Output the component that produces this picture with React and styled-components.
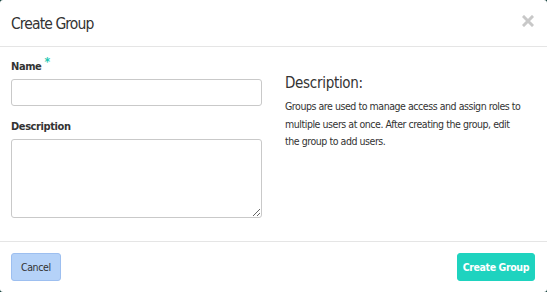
import React from 'react';
import styled, { createGlobalStyle } from 'styled-components';

const GlobalStyle = createGlobalStyle`
  html, body {
    margin: 0;
    padding: 0;
    background: #0b3a34;
  }
  body {
    font-family: "DejaVu Sans Condensed", "Liberation Sans", sans-serif;
    color: #333;
  }
`;

const Modal = styled.div`
  width: 547px;
  height: 292px;
  background: #fff;
  border-radius: 3px;
  display: flex;
  flex-direction: column;
`;

const Header = styled.div`
  height: 47px;
  flex: none;
  border-bottom: 1px solid #e5e5e5;
  display: flex;
  align-items: center;
  justify-content: space-between;
  padding: 2px 13px 0 11px;
  box-sizing: border-box;
`;

const Title = styled.h4`
  margin: 0;
  font-size: 15.5px;
  font-weight: 400;
  letter-spacing: -0.9px;
  color: #333;
`;

const Close = styled.button`
  border: 0;
  background: none;
  padding: 0;
  color: #c8c8c8;
  cursor: pointer;
  display: flex;
  margin-top: -6px;
`;

const Body = styled.div`
  flex: 1;
  display: grid;
  grid-template-columns: 251px 1fr;
  column-gap: 23px;
  padding: 13px 11px 0 11px;
`;

const Field = styled.div`
  display: flex;
  flex-direction: column;
  margin-bottom: 14px;
`;

const Label = styled.label`
  font-size: 11px;
  font-weight: 700;
  letter-spacing: -0.4px;
  color: #333;
  margin-bottom: 6px;
  display: flex;
  align-items: flex-start;
  gap: 3px;
`;

const Required = styled.span`
  color: #1fc8b3;
  font-size: 12px;
  line-height: 1;
  margin-top: -4px;
`;

const Input = styled.input`
  height: 27px;
  box-sizing: border-box;
  border: 1px solid #c9c9c9;
  border-radius: 3px;
  font: inherit;
`;

const TextArea = styled.textarea`
  height: 79px;
  box-sizing: border-box;
  border: 1px solid #c9c9c9;
  border-radius: 3px;
  font: inherit;
`;

const Aside = styled.div`
  padding-top: 14px;
`;

const AsideTitle = styled.h4`
  margin: 0 0 6px;
  font-size: 15px;
  font-weight: 400;
  letter-spacing: -0.3px;
  color: #333;
`;

const AsideText = styled.p`
  margin: 0;
  font-size: 10.5px;
  letter-spacing: -0.45px;
  line-height: 17.5px;
  color: #333;
`;

const Footer = styled.div`
  height: 51px;
  flex: none;
  box-sizing: border-box;
  border-top: 1px solid #e5e5e5;
  display: flex;
  align-items: center;
  justify-content: space-between;
  padding: 0 12px 0 11px;
`;

const Button = styled.button`
  height: 28px;
  padding: 0 ${(p) => (p.$primary ? 5 : 9)}px;
  border-radius: 3px;
  font-family: inherit;
  font-size: 10.5px;
  letter-spacing: -0.4px;
  cursor: pointer;
  border: 1px solid ${(p) => (p.$primary ? '#1ed3bf' : '#9dbff0')};
  background: ${(p) => (p.$primary ? '#1ed3bf' : '#b5d2f8')};
  color: ${(p) => (p.$primary ? '#fff' : '#333')};
  font-weight: ${(p) => (p.$primary ? 700 : 400)};
`;

const CloseIcon = () => (
  <svg width="12" height="12" viewBox="0 0 12 12">
    <path d="M2 2 L10 10 M10 2 L2 10" stroke="currentColor" strokeWidth="3" strokeLinecap="square" />
  </svg>
);

export default function App() {
  return (
    <>
      <GlobalStyle />
      <Modal>
        <Header>
          <Title>Create Group</Title>
          <Close aria-label="Close">
            <CloseIcon />
          </Close>
        </Header>
        <Body>
          <div>
            <Field>
              <Label>
                Name <Required>*</Required>
              </Label>
              <Input />
            </Field>
            <Field>
              <Label>Description</Label>
              <TextArea />
            </Field>
          </div>
          <Aside>
            <AsideTitle>Description:</AsideTitle>
            <AsideText>
              Groups are used to manage access and assign roles to multiple users at once. After creating the
              group, edit
              <br />
              the group to add users.
            </AsideText>
          </Aside>
        </Body>
        <Footer>
          <Button>Cancel</Button>
          <Button $primary>Create Group</Button>
        </Footer>
      </Modal>
    </>
  );
}
